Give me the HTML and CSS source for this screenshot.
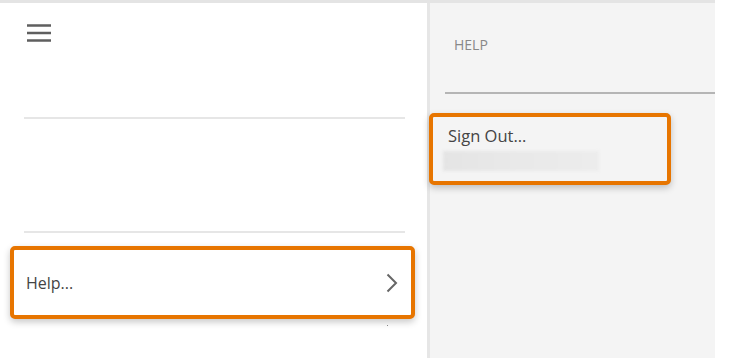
FILE: index.html
```html
<!DOCTYPE html>
<html lang="en">
<head>
<meta charset="utf-8">
<title>Help menu</title>
<link rel="stylesheet" href="styles.css">
</head>
<body>
<div class="app">
  <aside class="left">
    <svg class="hamburger" width="24" height="18" viewBox="0 0 24 18" aria-hidden="true">
      <path d="M0 1.5H24M0 9H24M0 16.5H24" stroke="#5f5f5f" stroke-width="2.4" fill="none"/>
    </svg>
    <div class="divider first"></div>
    <div class="divider second"></div>
    <div class="menu-item">
      <span class="menu-text">Help...</span>
      <svg class="chevron" width="12" height="20" viewBox="0 0 12 20" aria-hidden="true">
        <path d="M1.5 1.5L10 10L1.5 18.5" stroke="#666" stroke-width="2" fill="none"/>
      </svg>
    </div>
    <span class="dot"></span>
  </aside>
  <section class="right">
    <div class="section-label">HELP</div>
    <div class="section-rule"></div>
    <div class="signout">
      <div class="signout-text">Sign Out...</div>
      <div class="signout-sub"></div>
    </div>
  </section>
</div>
</body>
</html>
```

FILE: styles.css
```css
html, body {
  margin: 0;
  padding: 0;
  background: #ffffff;
}

body {
  font-family: "Open Sans", "Noto Sans", sans-serif;
  color: #444;
}

.app {
  width: 715px;
  height: 358px;
  box-sizing: border-box;
  border-top: 3px solid #e4e4e4;
  display: flex;
  overflow: hidden;
}

.left {
  width: 427px;
  flex: none;
  background: #ffffff;
  border-right: 3px solid #e6e6e6;
  display: flex;
  flex-direction: column;
}

.hamburger {
  display: block;
  margin: 21px 0 0 27px;
}

.divider {
  height: 2px;
  background: #e6e6e6;
  margin: 0 22px 0 24px;
}

.divider.first {
  margin-top: 75px;
}

.divider.second {
  margin-top: 112px;
}

.menu-item {
  margin: 13px 12px 0 10px;
  height: 73px;
  box-sizing: border-box;
  border: 4px solid #e77500;
  border-radius: 5px;
  background: #ffffff;
  box-shadow: 0 3px 7px rgba(0, 0, 0, 0.22);
  display: flex;
  align-items: center;
  justify-content: space-between;
  padding: 0 13px 0 12px;
}

.menu-text {
  font-size: 16px;
  line-height: 22px;
  color: #444;
}

.chevron {
  display: block;
}

.dot {
  display: block;
  width: 1px;
  height: 1px;
  background: #888;
  margin: 6px 0 0 387px;
}

.right {
  flex: 1;
  background: #f4f4f4;
  display: flex;
  flex-direction: column;
}

.section-label {
  margin: 32px 0 0 24px;
  font-size: 14px;
  line-height: 19px;
  color: #888;
}

.section-rule {
  height: 2px;
  background: #b5b5b5;
  margin: 38px 0 0 15px;
}

.signout {
  margin: 19px 0 0 -1px;
  width: 242px;
  height: 72px;
  box-sizing: border-box;
  border: 4px solid #e77500;
  border-radius: 5px;
  background: #f4f4f4;
  box-shadow: 0 3px 7px rgba(0, 0, 0, 0.22);
  padding: 8px 0 0 15px;
}

.signout-text {
  font-size: 16.5px;
  line-height: 22px;
  color: #444;
}

.signout-sub {
  margin: 4px 0 0 -5px;
  width: 156px;
  height: 20px;
  background: linear-gradient(90deg, #e4e4e4, #e8e8e8 40%, #ececec);
  filter: blur(1.5px);
}
```
